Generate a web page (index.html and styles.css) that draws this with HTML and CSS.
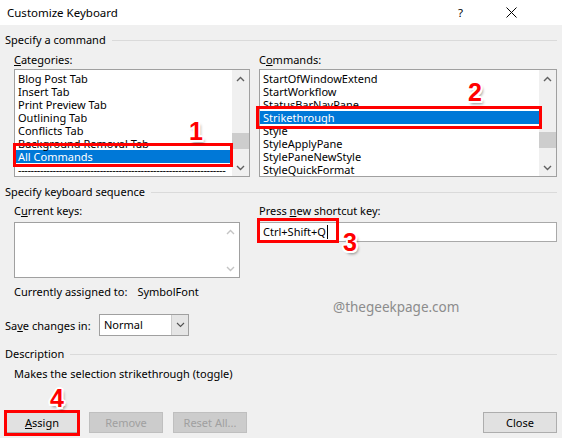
FILE: index.html
```html
<!DOCTYPE html>
<html>
<head>
<meta charset="utf-8">
<link rel="stylesheet" href="styles.css">
</head>
<body>
<div class="dialog">
  <div class="titlebar">
    <span class="title">Customize Keyboard</span>
    <span class="help">?</span>
    <svg class="close" width="11" height="11" viewBox="0 0 11 11"><path d="M0.5 0.5 L10.5 10.5 M10.5 0.5 L0.5 10.5" stroke="#000" stroke-width="1" fill="none"/></svg>
  </div>
  <div class="content">
    <div class="group-head"><span>Specify a command</span><i class="rule"></i></div>
    <div class="cols cmd-cols">
      <div class="col">
        <div class="label"><u>C</u>ategories:</div>
        <div class="listbox">
          <ul class="items">
            <li>Blog Post Tab</li>
            <li>Insert Tab</li>
            <li>Print Preview Tab</li>
            <li>Outlining Tab</li>
            <li>Conflicts Tab</li>
            <li>Background Removal Tab</li>
            <li class="sel">All Commands</li>
            <li class="dash">------------------------------------------------------------------</li>
          </ul>
          <div class="scrollbar">
            <div class="arrow"><svg width="9" height="6" viewBox="0 0 9 6"><path d="M1 5 L4.5 1.5 L8 5" stroke="#606060" stroke-width="1.4" fill="none"/></svg></div>
            <div class="track"><div class="thumb thumb-cat"></div></div>
            <div class="arrow"><svg width="9" height="6" viewBox="0 0 9 6"><path d="M1 1 L4.5 4.5 L8 1" stroke="#606060" stroke-width="1.4" fill="none"/></svg></div>
          </div>
        </div>
      </div>
      <div class="col">
        <div class="label">C<u>o</u>mmands:</div>
        <div class="listbox">
          <ul class="items">
            <li>StartOfWindowExtend</li>
            <li>StartWorkflow</li>
            <li>StatusBarNavPane</li>
            <li class="sel">Strikethrough</li>
            <li>Style</li>
            <li>StyleApplyPane</li>
            <li>StylePaneNewStyle</li>
            <li>StyleQuickFormat</li>
          </ul>
          <div class="scrollbar">
            <div class="arrow"><svg width="9" height="6" viewBox="0 0 9 6"><path d="M1 5 L4.5 1.5 L8 5" stroke="#606060" stroke-width="1.4" fill="none"/></svg></div>
            <div class="track"><div class="thumb thumb-cmd"></div></div>
            <div class="arrow"><svg width="9" height="6" viewBox="0 0 9 6"><path d="M1 1 L4.5 4.5 L8 1" stroke="#606060" stroke-width="1.4" fill="none"/></svg></div>
          </div>
        </div>
      </div>
    </div>

    <div class="group-head second"><span>Specify keyboard sequence</span><i class="rule"></i></div>
    <div class="cols key-cols">
      <div class="col">
        <div class="label">C<u>u</u>rrent keys:</div>
        <div class="keysbox">
          <div class="keys-area"></div>
          <div class="scrollbar faded">
            <div class="arrow"><svg width="9" height="6" viewBox="0 0 9 6"><path d="M1 5 L4.5 1.5 L8 5" stroke="#c4c4c4" stroke-width="1.4" fill="none"/></svg></div>
            <div class="track"></div>
            <div class="arrow"><svg width="9" height="6" viewBox="0 0 9 6"><path d="M1 1 L4.5 4.5 L8 1" stroke="#c4c4c4" stroke-width="1.4" fill="none"/></svg></div>
          </div>
        </div>
        <div class="assigned"><span>Currently assigned to:</span><span class="assigned-val">SymbolFont</span></div>
      </div>
      <div class="col">
        <div class="label">Press <u>n</u>ew shortcut key:</div>
        <div class="shortcut">Ctrl+Shift+Q<span class="caret"></span></div>
      </div>
    </div>

    <div class="save-row">
      <span class="save-label">Sa<u>v</u>e changes in:</span>
      <div class="select">
        <span class="select-val">Normal</span>
        <span class="select-btn"><svg width="9" height="6" viewBox="0 0 9 6"><path d="M1 1 L4.5 4.5 L8 1" stroke="#505050" stroke-width="1.1" fill="none"/></svg></span>
      </div>
    </div>

    <div class="group-head third"><span>Description</span><i class="rule"></i></div>
    <div class="desc">Makes the selection strikethrough (toggle)</div>

    <div class="buttons">
      <button class="btn"><u>A</u>ssign</button>
      <button class="btn disabled">Remove</button>
      <button class="btn disabled">Reset All...</button>
      <button class="btn close-btn">Close</button>
    </div>
  </div>

  <div class="watermark">@thegeekpage.com</div>
  <div class="redbox rb1"></div>
  <div class="redbox rb2"></div>
  <div class="redbox rb3"></div>
  <div class="redbox rb4"></div>
  <div class="badge b1">1</div>
  <div class="badge b2">2</div>
  <div class="badge b3">3</div>
  <div class="badge b4">4</div>
</div>
</body>
</html>
```

FILE: styles.css
```css
* { box-sizing: border-box; }
html, body { margin: 0; padding: 0; }
body {
  width: 562px;
  height: 438px;
  overflow: hidden;
  background: #f0f0f0;
}
.dialog {
  position: relative;
  width: 562px;
  height: 438px;
  background: #f0f0f0;
  font-family: "Noto Sans", "Open Sans", sans-serif;
  font-size: 11px;
  color: #000;
}
.titlebar {
  height: 25px;
  background: #fff;
  display: flex;
  align-items: center;
  padding-left: 7px;
}
.title { font-size: 11.5px; }
.help { margin-left: auto; font-size: 11.5px; }
.close { margin-left: 43px; margin-right: 45px; }

.content { padding: 0 5px; }

.group-head {
  display: flex;
  align-items: center;
  height: 14px;
  line-height: 14px;
  margin-top: 8px;
}
.group-head .rule {
  flex: 1;
  height: 1px;
  background: #dadada;
  margin-left: 6px;
}
.group-head.second { margin-top: 8px; }
.group-head.third { margin-top: 11px; }

.cols {
  display: grid;
  grid-template-columns: 236px 1fr;
  column-gap: 9px;
  padding-left: 9px;
}
.cmd-cols { margin-top: 6px; }
.key-cols { margin-top: 5px; }

.label {
  height: 14px;
  line-height: 14px;
  margin-bottom: 2px;
}
.key-cols .label { margin-bottom: 4px; }

.listbox {
  height: 108px;
  border: 1px solid #a0a0a0;
  background: #fff;
  display: flex;
}
.items {
  list-style: none;
  margin: 0;
  padding: 2px 0 0 0;
  flex: 1;
  min-width: 0;
  overflow: hidden;
}
.items li {
  height: 13px;
  line-height: 13px;
  padding-left: 3px;
  white-space: nowrap;
}
.items li.sel {
  background: #0078d7;
  color: #fff;
}
.items li.dash { letter-spacing: -0.4px; overflow: hidden; padding-right: 8px; }

.scrollbar {
  width: 17px;
  background: #f0f0f0;
  display: flex;
  flex-direction: column;
}
.scrollbar .arrow {
  height: 17px;
  display: flex;
  align-items: center;
  justify-content: center;
}
.scrollbar .track { flex: 1; }
.thumb {
  height: 16px;
  background: #cdcdcd;
}
.thumb-cat { margin-top: 46px; }
.thumb-cmd { margin-top: 45px; }

.keysbox {
  width: 226px;
  height: 56px;
  border: 1px solid #a0a0a0;
  background: #fff;
  display: flex;
}
.keys-area { flex: 1; }
.scrollbar.faded { background: #fff; }

.assigned {
  margin-top: 7px;
  height: 14px;
  line-height: 14px;
  display: flex;
}
.assigned-val { margin-left: 10px; }

.shortcut {
  height: 20px;
  border: 1px solid #a9a9a9;
  background: #fff;
  line-height: 18px;
  padding-left: 3px;
  display: flex;
  align-items: center;
}
.caret {
  display: inline-block;
  width: 1px;
  height: 14px;
  background: #000;
  margin-left: 1px;
}

.save-row {
  display: flex;
  align-items: center;
  margin-top: 15px;
  height: 22px;
}
.save-label { width: 94px; }
.select {
  width: 90px;
  height: 22px;
  border: 1px solid #a0a0a0;
  background: #fff;
  display: flex;
}
.select-val {
  flex: 1;
  line-height: 20px;
  padding-left: 4px;
}
.select-btn {
  width: 17px;
  background: #e5e5e5;
  border-left: 1px solid #cccccc;
  display: flex;
  align-items: center;
  justify-content: center;
}

.desc {
  margin-top: 6px;
  padding-left: 9px;
  height: 14px;
  line-height: 14px;
}

.buttons {
  display: flex;
  gap: 10px;
  margin-top: 31px;
}
.btn {
  width: 74px;
  height: 21px;
  border: 1px solid #adadad;
  background: #e1e1e1;
  font-family: "Noto Sans", "Open Sans", sans-serif;
  font-size: 11px;
  color: #000;
  padding: 0;
  line-height: 19px;
}
.btn.disabled {
  background: #cccccc;
  border-color: #bfbfbf;
  color: #a0a0a0;
}
.close-btn { margin-left: auto; }

.watermark {
  position: absolute;
  left: 333px;
  top: 298px;
  font-size: 13.5px;
  line-height: 18px;
  color: #8c8c8c;
}

.redbox {
  position: absolute;
  border: 3px solid #ff0000;
}
.rb1 { left: 13px; top: 143px; width: 220px; height: 24px; }
.rb2 { left: 256px; top: 106px; width: 286px; height: 23px; }
.rb3 { left: 257px; top: 218px; width: 82px; height: 25px; }
.rb4 { left: 4px; top: 410px; width: 76px; height: 26px; }

.badge {
  position: absolute;
  font-family: "Liberation Sans", Arial, sans-serif;
  font-weight: bold;
  font-size: 25px;
  line-height: 25px;
  color: #ff0000;
  text-shadow:
    -2px 0 #fff, 2px 0 #fff, 0 -2px #fff, 0 2px #fff,
    -1.5px -1.5px #fff, 1.5px 1.5px #fff, -1.5px 1.5px #fff, 1.5px -1.5px #fff,
    2px 3px 3px rgba(0,0,0,0.45);
}
.b1 { left: 189px; top: 119px; }
.b2 { left: 468px; top: 80px; }
.b3 { left: 343px; top: 230px; }
.b4 { left: 50px; top: 386px; }
```
